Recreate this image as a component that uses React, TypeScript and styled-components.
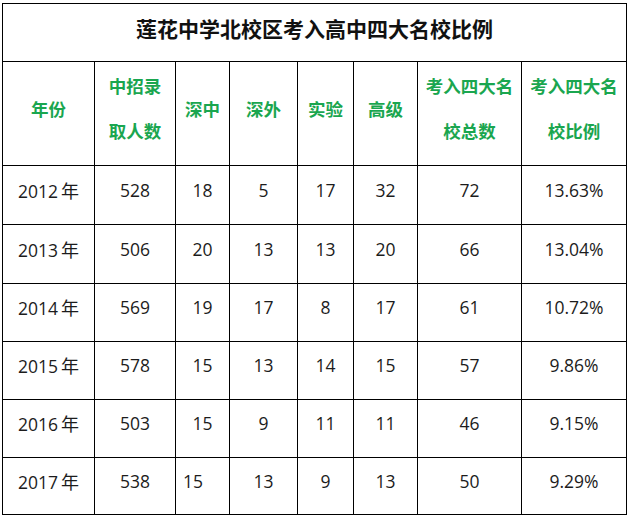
import React from "react";
import styled, { createGlobalStyle } from "styled-components";

const GlobalStyle = createGlobalStyle`
  html, body { margin: 0; padding: 0; background: #ffffff; }
  body { font-family: "Open Sans", "Noto Sans CJK SC", sans-serif; }
`;

const Page = styled.div`
  padding: 3px 0 0 2px;
`;

const Table = styled.table`
  border-collapse: collapse;
  table-layout: fixed;
  width: 625px;
  color: #1c1c1c;
`;

const Cell = styled.td<{ $align?: "left" | "center" }>`
  border: 1px solid #000;
  padding: 0 0 11px ${(p) => (p.$align === "left" ? "7px" : "0")};
  text-align: ${(p) => p.$align ?? "center"};
  vertical-align: middle;
  font-size: 17.5px;
  white-space: nowrap;
`;

const TitleCell = styled.td`
  border: 1px solid #000;
  padding: 0 0 10px;
  text-align: center;
  vertical-align: middle;
  font-family: "Noto Sans CJK SC", sans-serif;
  font-weight: 700;
  font-size: 21px;
  color: #111;
`;

const HeadCell = styled.th`
  border: 1px solid #000;
  padding: 0 0 11px;
  text-align: center;
  vertical-align: middle;
  font-family: "Noto Sans CJK SC", sans-serif;
  font-weight: 700;
  font-size: 17.5px;
  line-height: 45px;
  color: #1aa64f;
`;

const Row = styled.tr<{ $h: number }>`
  height: ${(p) => p.$h}px;
`;

const YearNum = styled.span`
  margin-right: 3px;
`;

const YearMark = styled.span`
  font-family: "Noto Sans CJK SC", sans-serif;
  font-size: 18px;
`;

const widths = [92, 81, 54, 68, 56, 64, 104, 105];

const headers: string[][] = [
  ["年份"],
  ["中招录", "取人数"],
  ["深中"],
  ["深外"],
  ["实验"],
  ["高级"],
  ["考入四大名", "校总数"],
  ["考入四大名", "校比例"],
];

const rows: { cells: string[]; h: number }[] = [
  { cells: ["2012年", "528", "18", "5", "17", "32", "72", "13.63%"], h: 59 },
  { cells: ["2013年", "506", "20", "13", "13", "20", "66", "13.04%"], h: 59 },
  { cells: ["2014年", "569", "19", "17", "8", "17", "61", "10.72%"], h: 58 },
  { cells: ["2015年", "578", "15", "13", "14", "15", "57", "9.86%"], h: 58 },
  { cells: ["2016年", "503", "15", "9", "11", "11", "46", "9.15%"], h: 58 },
  { cells: ["2017年", "538", "15", "13", "9", "13", "50", "9.29%"], h: 57 },
];

function renderCell(text: string) {
  if (text.endsWith("年")) {
    return (
      <>
        <YearNum>{text.slice(0, -1)}</YearNum>
        <YearMark>年</YearMark>
      </>
    );
  }
  return text;
}

export default function App() {
  return (
    <>
      <GlobalStyle />
      <Page>
        <Table>
          <colgroup>
            {widths.map((w, i) => (
              <col key={i} style={{ width: w }} />
            ))}
          </colgroup>
          <tbody>
            <Row $h={58}>
              <TitleCell colSpan={8}>莲花中学北校区考入高中四大名校比例</TitleCell>
            </Row>
            <Row $h={104}>
              {headers.map((lines, i) => (
                <HeadCell key={i}>
                  {lines.map((l, j) => (
                    <div key={j}>{l}</div>
                  ))}
                </HeadCell>
              ))}
            </Row>
            {rows.map((r, ri) => (
              <Row key={ri} $h={r.h}>
                {r.cells.map((c, ci) => (
                  <Cell key={ci} $align={ri === 5 && ci === 2 ? "left" : "center"}>
                    {renderCell(c)}
                  </Cell>
                ))}
              </Row>
            ))}
          </tbody>
        </Table>
      </Page>
    </>
  );
}
